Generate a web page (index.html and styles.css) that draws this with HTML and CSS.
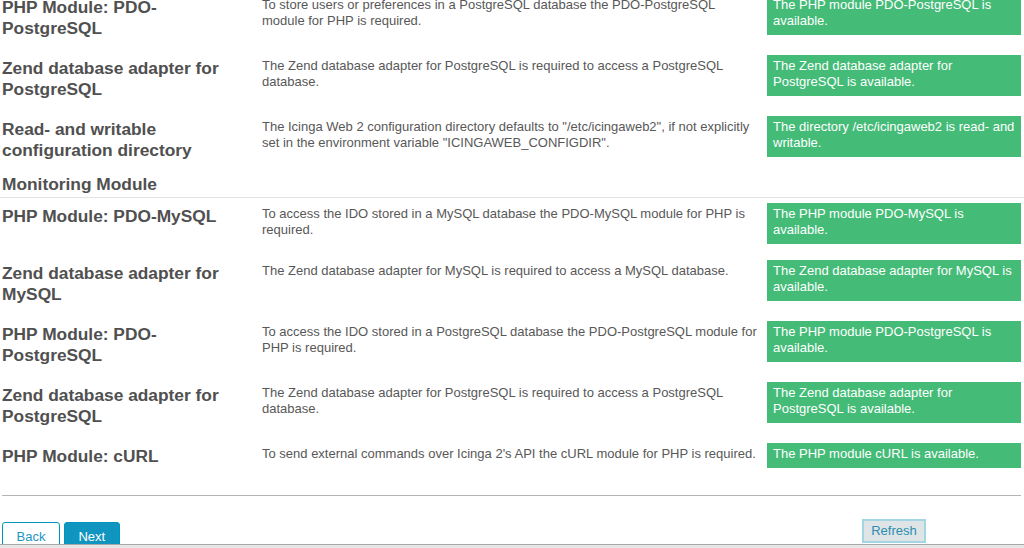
FILE: index.html
```html
<!DOCTYPE html>
<html>
<head>
  <title>Icinga Web 2 Setup - Requirements</title>
  <link rel="stylesheet" href="styles.css">
</head>
<body>
  <div class="viewport">
    <div class="wizard">
      <div class="req-section scrolled">
        <div class="req-row">
          <h3 class="req-title">PHP Module: PDO-PostgreSQL</h3>
          <div class="req-desc">To store users or preferences in a PostgreSQL database the PDO-PostgreSQL module for PHP is required.</div>
          <div class="req-state">The PHP module PDO-PostgreSQL is available.</div>
        </div>
        <div class="req-row">
          <h3 class="req-title">Zend database adapter for PostgreSQL</h3>
          <div class="req-desc">The Zend database adapter for PostgreSQL is required to access a PostgreSQL database.</div>
          <div class="req-state">The Zend database adapter for PostgreSQL is available.</div>
        </div>
        <div class="req-row">
          <h3 class="req-title">Read- and writable configuration directory</h3>
          <div class="req-desc">The Icinga Web 2 configuration directory defaults to "/etc/icingaweb2", if not explicitly set in the environment variable "ICINGAWEB_CONFIGDIR".</div>
          <div class="req-state">The directory /etc/icingaweb2 is read- and writable.</div>
        </div>
      </div>

      <h2 class="section-title">Monitoring Module</h2>
      <div class="req-section">
        <div class="req-row">
          <h3 class="req-title">PHP Module: PDO-MySQL</h3>
          <div class="req-desc">To access the IDO stored in a MySQL database the PDO-MySQL module for PHP is required.</div>
          <div class="req-state">The PHP module PDO-MySQL is available.</div>
        </div>
        <div class="req-row">
          <h3 class="req-title">Zend database adapter for MySQL</h3>
          <div class="req-desc">The Zend database adapter for MySQL is required to access a MySQL database.</div>
          <div class="req-state">The Zend database adapter for MySQL is available.</div>
        </div>
        <div class="req-row">
          <h3 class="req-title">PHP Module: PDO-PostgreSQL</h3>
          <div class="req-desc">To access the IDO stored in a PostgreSQL database the PDO-PostgreSQL module for PHP is required.</div>
          <div class="req-state">The PHP module PDO-PostgreSQL is available.</div>
        </div>
        <div class="req-row">
          <h3 class="req-title">Zend database adapter for PostgreSQL</h3>
          <div class="req-desc">The Zend database adapter for PostgreSQL is required to access a PostgreSQL database.</div>
          <div class="req-state">The Zend database adapter for PostgreSQL is available.</div>
        </div>
        <div class="req-row">
          <h3 class="req-title">PHP Module: cURL</h3>
          <div class="req-desc">To send external commands over Icinga 2's API the cURL module for PHP is required.</div>
          <div class="req-state">The PHP module cURL is available.</div>
        </div>
      </div>

      <div class="separator"></div>

      <div class="buttons">
        <div class="nav-buttons">
          <button class="btn-back">Back</button>
          <button class="btn-next">Next</button>
        </div>
        <div></div>
        <div class="refresh-cell">
          <button class="btn-refresh">Refresh</button>
        </div>
      </div>
    </div>
  </div>
  <div class="footer"></div>
</body>
</html>
```

FILE: styles.css
```css
html, body { margin: 0; padding: 0; height: 100%; }
body { display: flex; flex-direction: column; font-family: "Liberation Sans", Arial, sans-serif; font-size: 13px; color: #555; background: #fff; }
.viewport { flex: 1; min-height: 0; overflow: hidden; }
.footer { height: 3px; border-top: 1px solid #a8a8a8; background: #e6e6e6; }

.wizard { padding: 0 3px 0 2px; }
.req-section { display: flex; flex-direction: column; gap: 16px; }
.req-section.scrolled { margin-top: -6px; }
.req-row { display: grid; grid-template-columns: 260px 505px 254px; align-items: start; }
.req-title { margin: 0; padding: 3px 12px 0 0; font-size: 17.33px; line-height: 21px; font-weight: bold; color: #505050; }
.req-desc { padding: 3px 8px 0 0; line-height: 16px; color: #585858; }
.req-state { padding: 3px 4px 6px 6px; line-height: 16px; background: #44bb77; color: #fff; }

.section-title { margin: 13px -3px 5px -2px; padding: 0 0 2px 2px; font-size: 17.33px; line-height: 21px; font-weight: bold; color: #505050; border-bottom: 1px solid #e3e3e3; }

.separator { margin-top: 27px; height: 1px; background: #b4b4b4; }

.buttons { display: grid; grid-template-columns: 260px 505px 254px; align-items: start; margin-top: 23px; }
.nav-buttons { display: flex; gap: 4px; margin-top: 3px; }
button { font-family: "Liberation Sans", Arial, sans-serif; font-size: 13px; line-height: 16px; cursor: pointer; }
.btn-back, .btn-next { padding: 6px 13.5px; border: 1px solid #0095bf; border-radius: 3px 3px 0 0; }
.btn-back { background: #fff; color: #1e96bf; }
.btn-next { background: #0f95c0; color: #fff; }
.refresh-cell { display: flex; justify-content: center; }
.btn-refresh { padding: 2px 7px; border: 2px solid #a3d5e2; background: #dfe4e7; color: #2c8db0; }
```
